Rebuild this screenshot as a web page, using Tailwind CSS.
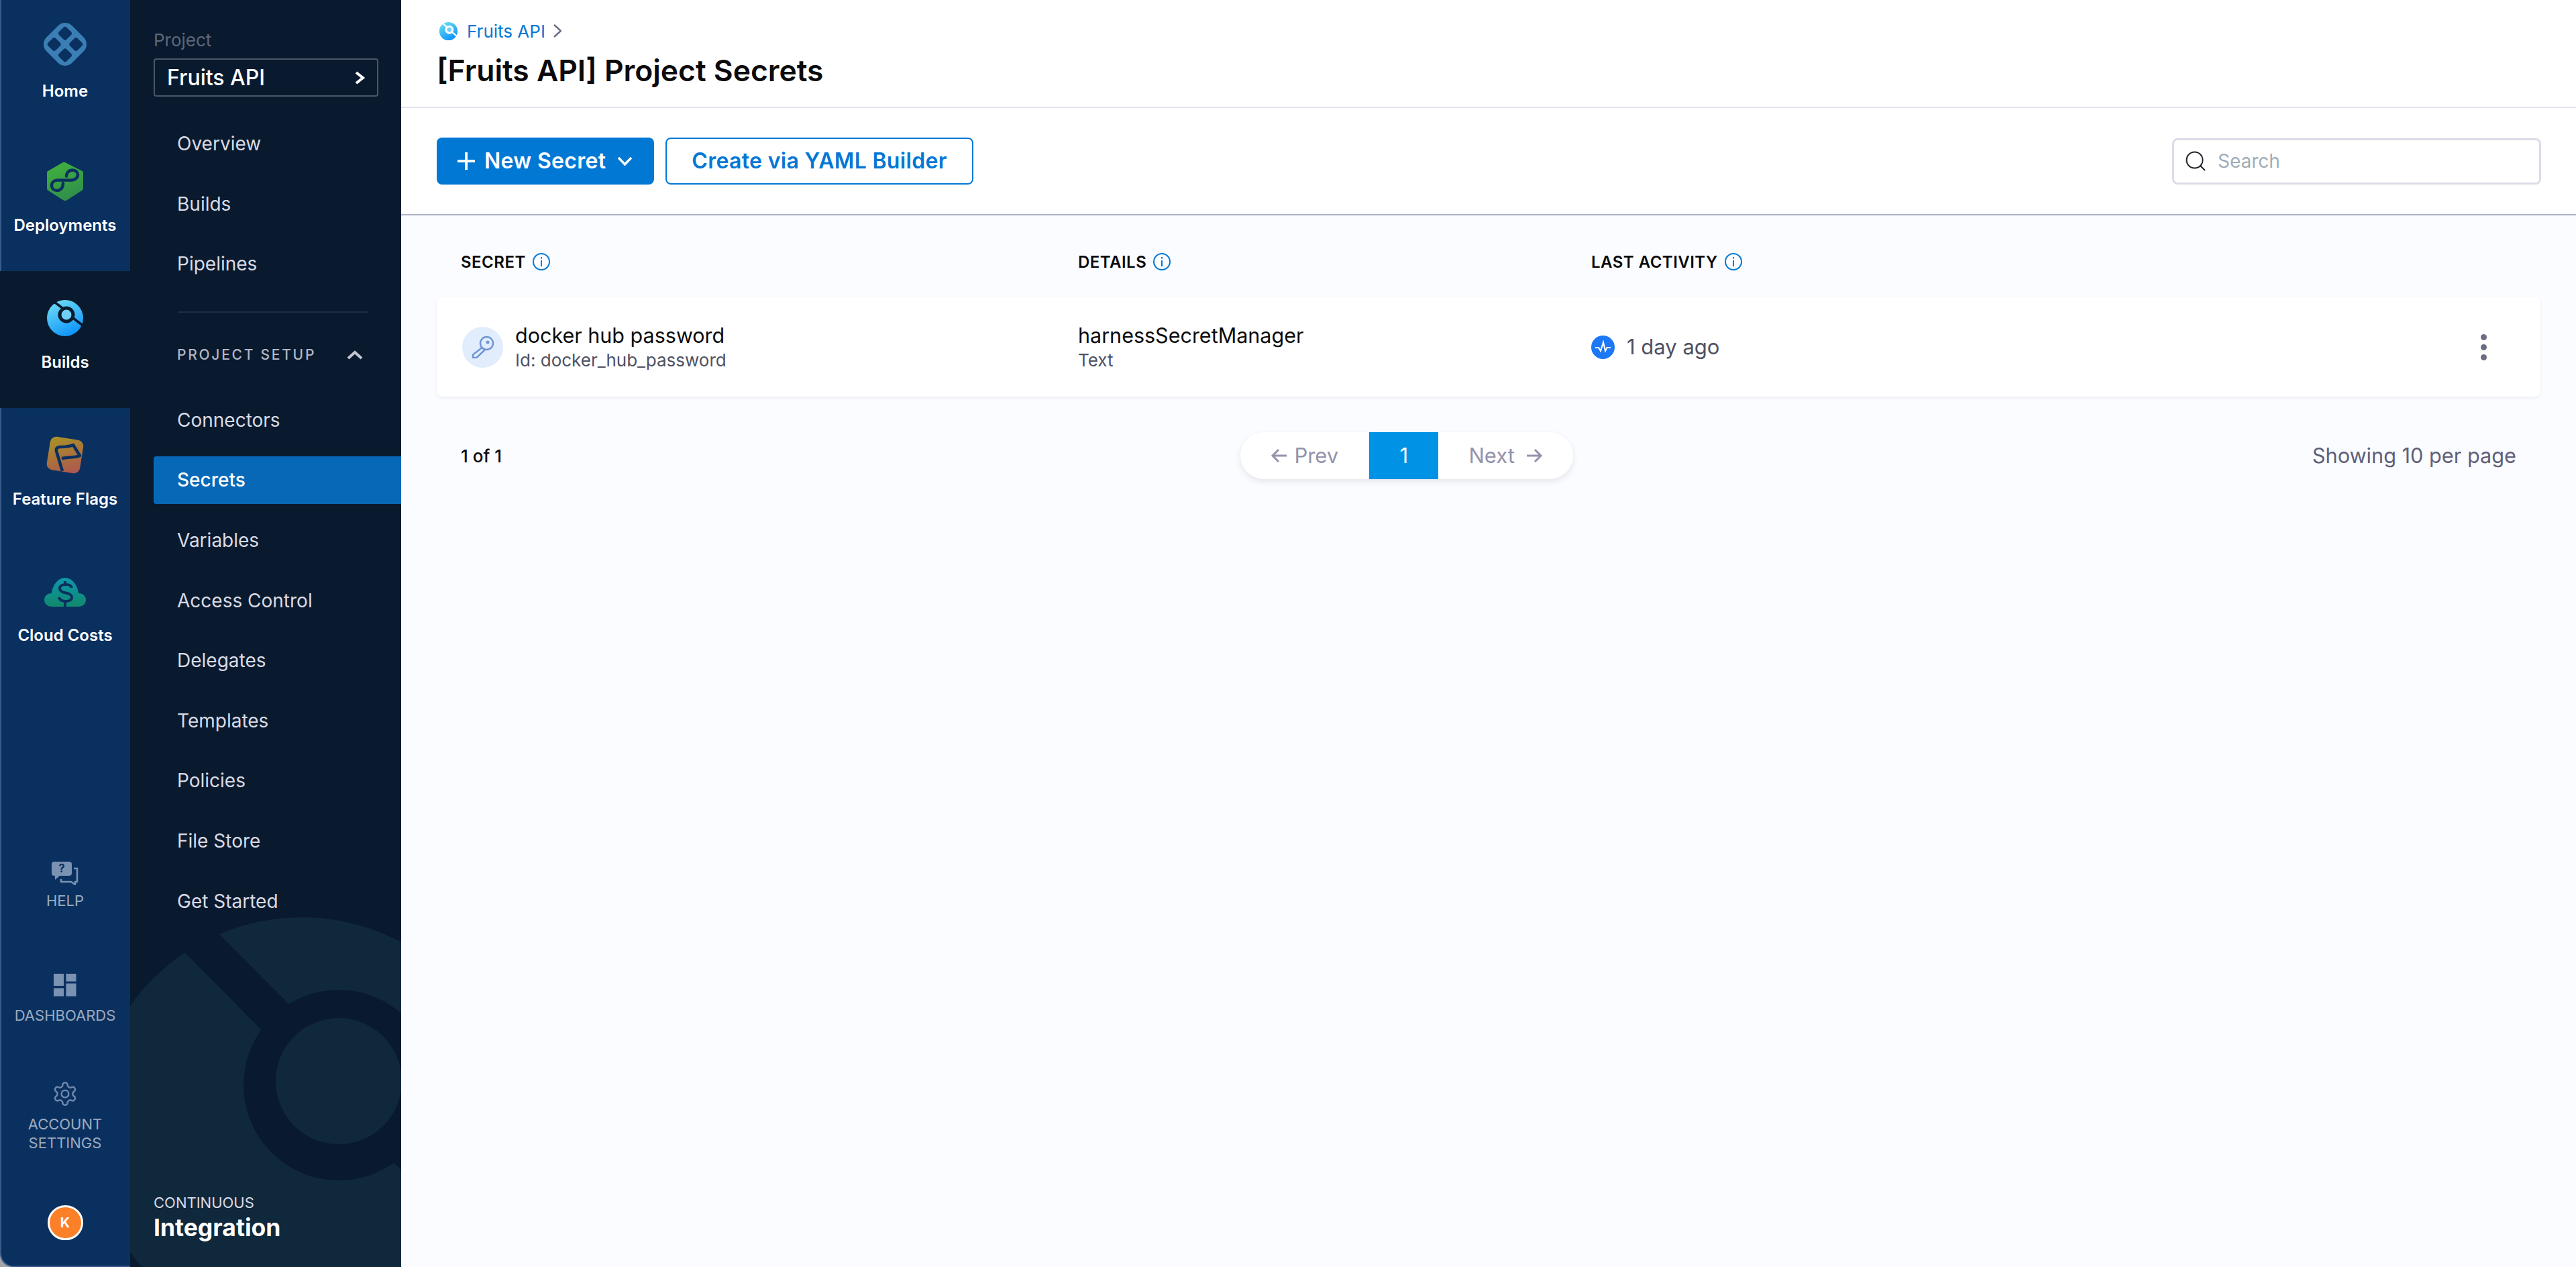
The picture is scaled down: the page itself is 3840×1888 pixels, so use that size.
<!DOCTYPE html>
<html lang="en">
<head>
<meta charset="utf-8">
<title>Fruits API Project Secrets</title>
<script src="https://cdn.jsdelivr.net/npm/@tailwindcss/browser@4"></script>
</head>
<body class="font-[Inter,sans-serif] bg-[#a5a5a5]">
<svg width="0" height="0" class="absolute">
  <defs>
    <linearGradient id="ci" x1="0.2" y1="0" x2="0.7" y2="1"><stop offset="0" stop-color="#6fdcf3"/><stop offset="1" stop-color="#0a92fb"/></linearGradient>
    <linearGradient id="cd" x1="0.3" y1="0" x2="0.7" y2="1"><stop offset="0" stop-color="#41b03e"/><stop offset="1" stop-color="#2f8c4c"/></linearGradient>
    <linearGradient id="ff" x1="0.2" y1="0" x2="0.7" y2="1"><stop offset="0" stop-color="#a98f28"/><stop offset="1" stop-color="#ac5b4c"/></linearGradient>
    <linearGradient id="cc" x1="0.5" y1="0" x2="0.5" y2="1"><stop offset="0" stop-color="#0d98ab"/><stop offset="1" stop-color="#12886d"/></linearGradient>
  </defs>
</svg>
<div class="flex w-[3840px] h-[1888px] overflow-hidden">
  <!-- rail -->
  <aside class="w-[194px] h-full shrink-0 flex flex-col bg-[#0a3060] border-l-2 border-b-2 border-[#3a5b8a] rounded-bl-[20px] text-white">
    <a class="h-[200px] pt-[33px] flex flex-col items-center -ml-[2px] text-[24px] font-semibold">
      <svg class="w-[66px] h-[66px]" viewBox="0 0 66 66">
        <g transform="rotate(45 33 33)">
          <rect x="6" y="6" width="54" height="54" rx="15" fill="#3a7eb4"/>
          <rect x="13.500" y="13.500" width="16" height="16" rx="3.500" fill="#0a3060"/>
          <rect x="36.500" y="13.500" width="16" height="16" rx="3.500" fill="#0a3060"/>
          <rect x="13.500" y="36.500" width="16" height="16" rx="3.500" fill="#0a3060"/>
          <rect x="36.500" y="36.500" width="16" height="16" rx="3.500" fill="#0a3060"/>
        </g>
      </svg>
      <span class="mt-[22px] leading-[30px]">Home</span>
    </a>
    <a class="h-[204px] pt-[37px] flex flex-col items-center -ml-[2px] text-[24px] font-semibold">
      <svg class="w-[66px] h-[66px]" viewBox="0 0 66 66">
        <path transform="translate(33 33) scale(1.08 1.04) translate(-33 -33)" d="M33 6 L56 18 a3 3 0 0 1 2 3 V43 a4 4 0 0 1 -2 3.500 L36 60 a6 6 0 0 1 -6 0 L10 46.500 a4 4 0 0 1 -2 -3.500 V21 a3 3 0 0 1 2 -3 L30 6 a5 5 0 0 1 3 0z" fill="url(#cd)"/>
        <path d="M30 36 c0 7 -4 11 -9 11 c-5 0 -8 -3.500 -8 -7.500 c0 -5 4 -8 9 -8 h20 c5 0 10 -3 10 -8 c0 -4 -3.500 -7 -8 -7 c-5 0 -9 4 -9 9" fill="none" stroke="#0a3060" stroke-width="4.500" stroke-linecap="round"/>
      </svg>
      <span class="mt-[18px] leading-[30px]">Deployments</span>
    </a>
    <a class="h-[204px] pt-[37px] flex flex-col items-center -ml-[2px] bg-[#0a1a2e] text-[24px] font-semibold">
      <svg class="w-[66px] h-[66px]" viewBox="0 0 66 66">
        <circle cx="33" cy="33" r="27" fill="url(#ci)"/>
        <path d="M17 9 L37 24 M45 33 L62 46" stroke="#0a1a2e" stroke-width="3.500"/>
        <circle cx="35" cy="28" r="10" fill="#6fcff4" stroke="#0a1a2e" stroke-width="5"/>
      </svg>
      <span class="mt-[18px] leading-[30px]">Builds</span>
    </a>
    <a class="h-[204px] pt-[37px] flex flex-col items-center -ml-[2px] text-[24px] font-semibold">
      <svg class="w-[66px] h-[66px]" viewBox="0 0 66 66">
        <rect x="8" y="8" width="50" height="50" rx="9" transform="rotate(9 33 33)" fill="url(#ff)"/>
        <path d="M29 57 L20 27 c-1 -4 2 -6 6 -6 c6 0 12 0 19 -3 L55 34 c-7 3 -15 2 -27 4" fill="none" stroke="#0a3060" stroke-width="4.500" stroke-linejoin="round"/>
      </svg>
      <span class="mt-[18px] leading-[30px]">Feature Flags</span>
    </a>
    <a class="h-[204px] pt-[37px] flex flex-col items-center -ml-[2px] text-[24px] font-semibold">
      <svg class="w-[66px] h-[66px]" viewBox="0 0 66 66">
        <path d="M14 55 c-8 0 -12 -5 -12 -10 c0 -6 5 -10 11 -10 c1 -11 9 -23 20 -23 c11 0 19 12 20 23 c6 0 11 4 11 10 c0 5 -4 10 -12 10z" fill="url(#cc)"/>
        <path d="M43 27 c-1 -4 -5 -5 -9 -5 c-5 0 -9 2 -9 6 c0 4 4 5.500 9 6.500 c5 1 9 2.500 9 6.500 c0 4 -4 6 -9 6 c-5 0 -9 -2 -10 -6 M33 17 V23 M33 47 V55" fill="none" stroke="#0a3060" stroke-width="4"/>
      </svg>
      <span class="mt-[17px] leading-[30px]">Cloud Costs</span>
    </a>
    <div class="mt-auto pb-[38px] -ml-[2px] flex flex-col items-center text-[22px] leading-[28px] text-white/60 text-center">
      <svg class="w-[40px] h-[35px]" viewBox="0 0 40 35">
        <path d="M4 0 H26 a4 4 0 0 1 4 4 V17 a4 4 0 0 1 -4 4 H12 L5 27 V21 H4 a4 4 0 0 1 -4 -4 V4 a4 4 0 0 1 4 -4z" fill="#7b93b3"/>
        <text x="15" y="16" text-anchor="middle" font-size="17" font-weight="700" fill="#0a3060" font-family="Inter">?</text>
        <path d="M33 10 H38 V30 L35 30 V34 L29 30 H14 V26" fill="none" stroke="#7b93b3" stroke-width="2.500" stroke-linejoin="round"/>
      </svg>
      <span class="mt-[9px]">HELP</span>
      <svg class="mt-[95px] w-[34px] h-[34px]" viewBox="0 0 34 34" fill="#7b93b3">
        <rect x="0" y="0" width="15" height="18"/><rect x="18.500" y="0" width="15" height="11.500"/><rect x="0" y="21.500" width="15" height="12"/><rect x="18.500" y="14.500" width="15" height="19"/>
      </svg>
      <span class="mt-[14px]">DASHBOARDS</span>
      <svg class="mt-[83px] w-[40px] h-[40px]" viewBox="0 0 24 24" fill="none" stroke="#6d88ab" stroke-width="1.500">
        <path d="M12.220 2h-.44a2 2 0 0 0-2 2v.18a2 2 0 0 1-1 1.730l-.43.25a2 2 0 0 1-2 0l-.15-.08a2 2 0 0 0-2.730.73l-.22.38a2 2 0 0 0 .73 2.730l.15.1a2 2 0 0 1 1 1.720v.51a2 2 0 0 1-1 1.740l-.15.09a2 2 0 0 0-.73 2.730l.22.38a2 2 0 0 0 2.730.73l.15-.08a2 2 0 0 1 2 0l.43.25a2 2 0 0 1 1 1.730V20a2 2 0 0 0 2 2h.44a2 2 0 0 0 2-2v-.18a2 2 0 0 1 1-1.730l.43-.25a2 2 0 0 1 2 0l.15.08a2 2 0 0 0 2.730-.73l.22-.39a2 2 0 0 0-.73-2.730l-.15-.08a2 2 0 0 1-1-1.740v-.5a2 2 0 0 1 1-1.740l.15-.09a2 2 0 0 0 .73-2.730l-.22-.38a2 2 0 0 0-2.730-.73l-.15.08a2 2 0 0 1-2 0l-.43-.25a2 2 0 0 1-1-1.730V4a2 2 0 0 0-2-2z"/>
        <circle cx="12" cy="12" r="3.200"/>
      </svg>
      <span class="mt-[11px]">ACCOUNT<br>SETTINGS</span>
      <div class="mt-[79px] w-[53px] h-[52px] rounded-full bg-[#fb8027] border-[3px] border-white flex items-center justify-center text-white text-[20px] font-bold">K</div>
    </div>
  </aside>

  <!-- nav -->
  <nav class="relative w-[404px] h-full shrink-0 bg-[#0a1a2e] flex flex-col text-[#d9dae5] text-[28px]">
    <svg class="absolute left-0 bottom-0 w-[404px] h-[600px]" viewBox="194 1288 404 600">
      <circle cx="450" cy="1682" r="315" fill="#10283b"/>
      <circle cx="505" cy="1617" r="142" fill="#0a1a2e"/>
      <path d="M200 1304 L505 1611 L800 1906" stroke="#0a1a2e" stroke-width="56" fill="none"/>
      <circle cx="505" cy="1611" r="94" fill="#10283b"/>
    </svg>
    <div class="relative flex flex-col h-full">
      <div class="pt-[44px] pl-[35px] text-[26px] leading-[32px] text-[#5d677b]">Project</div>
      <div class="mt-[11px] ml-[35px] w-[335px] h-[57px] rounded-[4px] border-2 border-[#4b5668] flex items-center justify-between pl-[18px] pr-[16px] text-white text-[32px] font-medium">
        <span>Fruits API</span>
        <svg class="w-[20px] h-[24px]" viewBox="0 0 20 24" fill="none" stroke="#fff" stroke-width="4"><path d="M5 4 L15 12 L5 20"/></svg>
      </div>
      <div class="mt-[34px] ml-[35px] flex flex-col gap-[18px]">
        <a class="h-[71.700px] pl-[35px] flex items-center">Overview</a>
        <a class="h-[71.700px] pl-[35px] flex items-center">Builds</a>
        <a class="h-[71.700px] pl-[35px] flex items-center">Pipelines</a>
      </div>
      <div class="mt-[35px] ml-[71px] w-[283px] h-[2px] bg-[#1e2e42]"></div>
      <div class="mt-[47px] ml-[70px] mr-[57px] h-[32px] flex items-center justify-between text-[21px] tracking-[0.13em] font-medium text-[#b3b7c4]">
        <span>PROJECT SETUP</span>
        <svg class="w-[24px] h-[16px]" viewBox="0 0 24 16" fill="none" stroke="#c4c7d2" stroke-width="4"><path d="M2 13 L12 4 L22 13"/></svg>
      </div>
      <div class="mt-[45px] ml-[35px] flex flex-col gap-[18px]">
        <a class="h-[71.600px] pl-[35px] flex items-center">Connectors</a>
        <a class="h-[71.600px] pl-[35px] flex items-center bg-[#0768b8] rounded-l-[4px] text-white font-medium">Secrets</a>
        <a class="h-[71.600px] pl-[35px] flex items-center">Variables</a>
        <a class="h-[71.600px] pl-[35px] flex items-center">Access Control</a>
        <a class="h-[71.600px] pl-[35px] flex items-center">Delegates</a>
        <a class="h-[71.600px] pl-[35px] flex items-center">Templates</a>
        <a class="h-[71.600px] pl-[35px] flex items-center">Policies</a>
        <a class="h-[71.600px] pl-[35px] flex items-center">File Store</a>
        <a class="h-[71.600px] pl-[35px] flex items-center">Get Started</a>
      </div>
      <div class="mt-auto pl-[35px] pb-[36px]">
        <div class="text-[22px] leading-[28px] text-[#d9dae5]">CONTINUOUS</div>
        <div class="mt-[2px] text-[35.500px] leading-[44px] font-bold text-white">Integration</div>
      </div>
    </div>
  </nav>

  <!-- main -->
  <main class="flex-1 min-w-0 flex flex-col bg-[#fafcff]">
    <header class="h-[161px] bg-white border-b-2 border-[#e2e1ec] pl-[53px] pt-[32px]">
      <div class="flex items-center h-[28px] text-[26px] text-[#0278d5]">
        <svg class="ml-[3px] w-[29px] h-[29px]" viewBox="0 0 66 66">
          <circle cx="33" cy="33" r="31" fill="url(#ci)"/>
          <path d="M13 6 L33 24 M44 35 L64 52" stroke="#fff" stroke-width="5"/>
          <circle cx="36" cy="28" r="11" fill="#6fcff4" stroke="#fff" stroke-width="7"/>
        </svg>
        <span class="ml-[13px]">Fruits API</span>
        <svg class="ml-[12px] w-[12px] h-[20px]" viewBox="0 0 12 20" fill="none" stroke="#6b6d85" stroke-width="2.500"><path d="M1 1 L11 10 L1 19"/></svg>
      </div>
      <h1 class="mt-[21px] text-[44.400px] leading-[48px] font-semibold text-[#0b0b0d]">[Fruits API] Project Secrets</h1>
    </header>

    <div class="h-[160px] shrink-0 bg-white border-b-2 border-[#b0b1c3] pl-[53px] pr-[52px] flex items-center">
      <button class="h-[70px] w-[324px] rounded-[8px] bg-[#0278d5] text-white text-[32px] font-semibold tracking-[0.01em] flex items-center pl-[31px]">
        <svg class="w-[26px] h-[26px]" viewBox="0 0 26 26" stroke="#fff" stroke-width="4"><path d="M13 0 V26 M0 13 H26"/></svg>
        <span class="ml-[14px]">New Secret</span>
        <svg class="ml-[17px] w-[23px] h-[16px]" viewBox="0 0 23 16" fill="none" stroke="#fff" stroke-width="3.500"><path d="M2 3 L11.500 13 L21 3"/></svg>
      </button>
      <button class="ml-[17px] h-[70px] w-[459px] rounded-[8px] border-2 border-[#0278d5] bg-white text-[#0278d5] text-[32px] font-semibold tracking-[0.01em] flex items-center justify-center">Create via YAML Builder</button>
      <div class="ml-auto w-[550px] h-[69px] rounded-[8px] border-[3px] border-[#dcdbe8] bg-white flex items-center pl-[17px]">
        <svg class="w-[30px] h-[30px]" viewBox="0 0 30 30" fill="none" stroke="#22222a" stroke-width="2"><circle cx="13.500" cy="13.500" r="12"/><path d="M22 22 L29 29"/></svg>
        <span class="ml-[18px] text-[28px] text-[#9fadb8]">Search</span>
      </div>
    </div>

    <div class="px-[53px] pt-[52px]">
      <div class="grid grid-cols-[920px_765px_1fr] px-[36px] h-[30px] items-center text-[24px] font-semibold tracking-[0.02em] text-[#0b0b0d]">
        <div class="flex items-center">SECRET
          <svg class="ml-[10px] -mt-[2px] w-[26px] h-[26px]" viewBox="0 0 26 26" fill="none" stroke="#0278d5" stroke-width="2"><circle cx="13" cy="13" r="12"/><path d="M13 11 V20 M13 6 V8.500"/></svg>
        </div>
        <div class="flex items-center">DETAILS
          <svg class="ml-[10px] -mt-[2px] w-[26px] h-[26px]" viewBox="0 0 26 26" fill="none" stroke="#0278d5" stroke-width="2"><circle cx="13" cy="13" r="12"/><path d="M13 11 V20 M13 6 V8.500"/></svg>
        </div>
        <div class="flex items-center">LAST ACTIVITY
          <svg class="ml-[10px] -mt-[2px] w-[26px] h-[26px]" viewBox="0 0 26 26" fill="none" stroke="#0278d5" stroke-width="2"><circle cx="13" cy="13" r="12"/><path d="M13 11 V20 M13 6 V8.500"/></svg>
        </div>
      </div>

      <div class="relative mt-[40px] h-[148px] rounded-[8px] bg-white shadow-[0_2px_4px_rgba(40,41,61,0.07)] grid grid-cols-[920px_765px_1fr] px-[36px] items-center">
        <div class="flex items-center">
          <div class="ml-[2px] w-[61px] h-[61px] rounded-full bg-[#e1edfd] flex items-center justify-center">
            <svg class="w-[34px] h-[34px]" viewBox="0 0 34 34" fill="none" stroke="#6f95d4" stroke-width="2.500"><circle cx="22.500" cy="11.500" r="9.500"/><circle cx="24" cy="10" r="2.500" fill="#6f95d4" stroke="none"/><path d="M15.500 18 L2 28.500 V33 H7.500 L20 21"/></svg>
          </div>
          <div class="ml-[18px]">
            <div class="text-[30.500px] leading-[38px] text-[#0b0b0d]">docker hub password</div>
            <div class="mt-[1px] text-[26px] leading-[34px] text-[#4f5162]">Id: docker_hub_password</div>
          </div>
        </div>
        <div>
          <div class="text-[30.500px] leading-[38px] text-[#0b0b0d]">harnessSecretManager</div>
          <div class="mt-[1px] text-[26px] leading-[34px] text-[#4f5162]">Text</div>
        </div>
        <div class="flex items-center">
          <svg class="w-[35px] h-[35px]" viewBox="0 0 35 35"><circle cx="17.500" cy="17.500" r="17.500" fill="#1c78f5"/><path d="M6 18 H11 L14 23 L18 10 L21 23 L23.500 18 H29" fill="none" stroke="#fff" stroke-width="2"/></svg>
          <span class="ml-[18px] text-[31px] text-[#4f5162]">1 day ago</span>
        </div>
        <svg class="absolute right-[80px] top-[55px] w-[9px] h-[39px]" viewBox="0 0 9 39" fill="#6b6d85"><circle cx="4.500" cy="4.500" r="4.500"/><circle cx="4.500" cy="19.500" r="4.500"/><circle cx="4.500" cy="34.500" r="4.500"/></svg>
      </div>

      <div class="mt-[53px] px-[36px] flex items-center justify-between">
        <span class="text-[26px] font-medium text-[#0b0b0d]">1 of 1</span>
        <div class="h-[70px] w-[496px] rounded-full bg-white shadow-[0_4px_10px_rgba(40,41,61,0.1)] flex overflow-hidden text-[31px] text-[#9293ab]">
          <div class="w-[192px] flex items-center pl-[45px]">
            <svg class="w-[24px] h-[22px]" viewBox="0 0 24 22" fill="none" stroke="#9293ab" stroke-width="3"><path d="M24 11 H3 M12 2 L3 11 L12 20"/></svg>
            <span class="ml-[11px]">Prev</span>
          </div>
          <div class="w-[103px] bg-[#0092e4] text-white flex items-center justify-center">1</div>
          <div class="flex-1 flex items-center pl-[45px]">
            <span>Next</span>
            <svg class="ml-[18px] w-[24px] h-[22px]" viewBox="0 0 24 22" fill="none" stroke="#9293ab" stroke-width="3"><path d="M0 11 H21 M12 2 L21 11 L12 20"/></svg>
          </div>
        </div>
        <span class="text-[30.700px] text-[#5f6078]">Showing 10 per page</span>
      </div>
    </div>
  </main>
</div>
</body>
</html>
